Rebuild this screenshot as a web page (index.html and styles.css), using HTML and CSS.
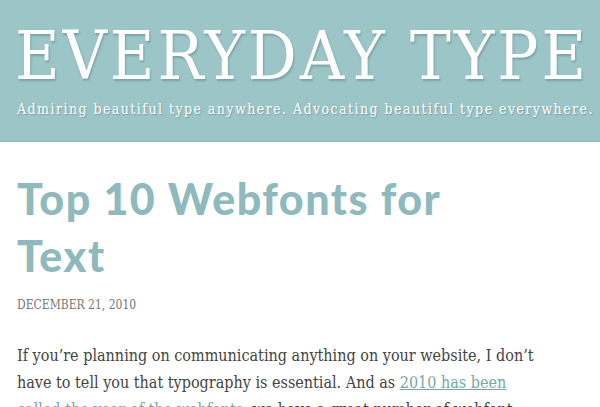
FILE: index.html
```html
<!DOCTYPE html>
<html>
<head>
<meta charset="utf-8">
<link rel="stylesheet" href="styles.css">
</head>
<body>
<header class="masthead">
  <h1 class="site-title">EVERYDAY TYPE</h1>
  <p class="tagline">Admiring beautiful type anywhere. Advocating beautiful type everywhere.</p>
</header>
<main class="content">
  <article class="post">
    <h2 class="post-title">Top 10 Webfonts for Text</h2>
    <p class="post-date">December 21, 2010</p>
    <p class="post-body">If you’re planning on communicating anything on your website, I don’t have to tell you that typography is essential. And as <a href="#">2010 has been called the year of the webfonts</a>, we have a great number of webfont services to choose from.</p>
  </article>
</main>
</body>
</html>
```
FILE: styles.css
```css
html, body {
  margin: 0;
  padding: 0;
  background: #ffffff;
  overflow: hidden;
}
.masthead {
  background: #9cc5c7;
  border-bottom: 2px solid #94bfc1;
  height: 140px;
  padding: 0 0 0 15px;
}
.site-title {
  margin: 0;
  padding-top: 20px;
  font-family: "DejaVu Serif", serif;
  font-stretch: condensed;
  font-weight: normal;
  font-size: 68px;
  line-height: 72px;
  letter-spacing: 3px;
  color: #ffffff;
  text-shadow: 1px 2px 2px rgba(60, 100, 100, 0.35);
  white-space: nowrap;
}
.tagline {
  margin: 9px 0 0 2px;
  font-family: "DejaVu Serif", serif;
  font-stretch: condensed;
  font-size: 14px;
  letter-spacing: 1.45px;
  color: #ffffff;
  text-shadow: 1px 1px 1px rgba(60, 100, 100, 0.4);
  white-space: nowrap;
}
.content {
  padding: 28px 0 0 17px;
  width: 530px;
}
.post-title {
  margin: 0;
  width: 450px;
  font-family: Lato, "Open Sans", sans-serif;
  font-weight: 900;
  font-size: 43px;
  line-height: 57px;
  letter-spacing: 1.5px;
  color: #8fbabd;
}
.post-date {
  margin: 14px 0 0;
  font-family: "DejaVu Serif", serif;
  font-stretch: condensed;
  font-size: 12px;
  text-transform: uppercase;
  letter-spacing: 0px;
  color: #777777;
}
.post-body {
  margin: 30px 0 0;
  font-family: "DejaVu Serif", serif;
  font-stretch: condensed;
  font-size: 16px;
  line-height: 27px;
  color: #444444;
}
.post-body a {
  color: #7aa6a8;
  text-decoration: underline;
}
```
